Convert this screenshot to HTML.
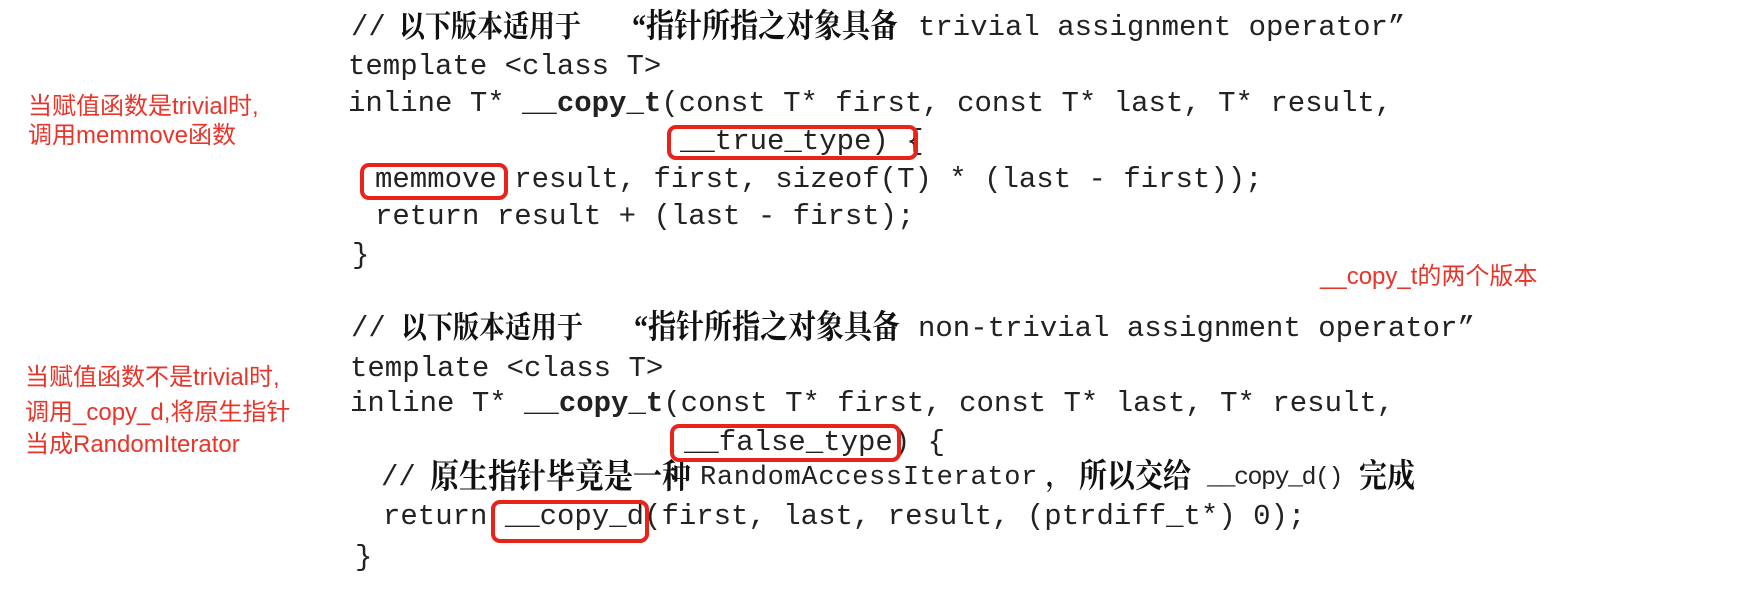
<!DOCTYPE html>
<html><head><meta charset="utf-8"><style>
body{margin:0;width:1750px;height:606px;background:#fff;position:relative;overflow:hidden}
.l{position:absolute;white-space:pre;font-family:"Liberation Mono","Noto Sans CJK SC",monospace;font-size:29px;line-height:32px;color:#222}
.c{position:absolute;white-space:pre;font-family:"Liberation Serif","Noto Serif CJK SC",serif;font-size:26px;line-height:32px;color:#111;font-weight:bold;transform:scaleY(1.18);transform-origin:50% 60%}
b{font-weight:bold}
.r{position:absolute;white-space:pre;font-family:"Liberation Sans","Noto Sans CJK SC",sans-serif;font-size:24px;line-height:30px;color:#e8352a}
.box{position:absolute;border:4px solid #e8231a;border-radius:9px;box-sizing:border-box}
</style></head><body>
<div class="l" style="left:351px;top:12px">//</div>
<div class="c" style="left:399px;top:12px">以下版本适用于</div>
<div class="c" style="left:632px;top:12px;font-size:28px">“指针所指之对象具备</div>
<div class="l" style="left:918px;top:12px">trivial assignment operator”</div>
<div class="l" style="left:348px;top:51px">template &lt;class T&gt;</div>
<div class="l" style="left:348px;top:88px">inline T* <b>__copy_t</b>(const T* first, const T* last, T* result,</div>
<div class="l" style="left:680px;top:126px">__true_type) {</div>
<div class="l" style="left:375px;top:164px">memmove result, first, sizeof(T) * (last - first));</div>
<div class="l" style="left:375px;top:201px">return result + (last - first);</div>
<div class="l" style="left:352px;top:240px">}</div>
<div class="r" style="left:1320px;top:262px;font-size:24px">__copy_t的两个版本</div>

<div class="l" style="left:351px;top:313px">//</div>
<div class="c" style="left:401px;top:313px">以下版本适用于</div>
<div class="c" style="left:634px;top:313px;font-size:28px">“指针所指之对象具备</div>
<div class="l" style="left:918px;top:313px">non-trivial assignment operator”</div>
<div class="l" style="left:350px;top:353px">template &lt;class T&gt;</div>
<div class="l" style="left:350px;top:388px">inline T* <b>__copy_t</b>(const T* first, const T* last, T* result,</div>
<div class="l" style="left:684px;top:427px">__false_type) {</div>
<div class="l" style="left:381px;top:462px">//</div>
<div class="c" style="left:430px;top:462px;font-size:29px">原生指针毕竟是一种</div>
<div class="l" style="left:700px;top:462px;font-size:27px;letter-spacing:0.7px">RandomAccessIterator</div>
<div class="c" style="left:1046px;top:462px;font-size:24px">，</div>
<div class="c" style="left:1079px;top:462px;font-size:28px">所以交给</div>
<div class="l" style="left:1207px;top:462px;font-size:25px;letter-spacing:-1.5px">__copy_d()</div>
<div class="c" style="left:1359px;top:462px;font-size:28px">完成</div>
<div class="l" style="left:383px;top:501px">return __copy_d(first, last, result, (ptrdiff_t*) 0);</div>
<div class="l" style="left:355px;top:542px">}</div>

<div class="box" style="left:667px;top:125px;width:251px;height:35px"></div>
<div class="box" style="left:360px;top:163px;width:148px;height:37px"></div>
<div class="box" style="left:670px;top:424px;width:231px;height:38px"></div>
<div class="box" style="left:491px;top:500px;width:158px;height:43px"></div>

<div class="r" style="left:28px;top:92px">当赋值函数是trivial时,</div>
<div class="r" style="left:28px;top:121px">调用memmove函数</div>
<div class="r" style="left:25px;top:363px">当赋值函数不是trivial时,</div>
<div class="r" style="left:25px;top:398px">调用_copy_d,将原生指针</div>
<div class="r" style="left:25px;top:430px">当成RandomIterator</div>
</body></html>
